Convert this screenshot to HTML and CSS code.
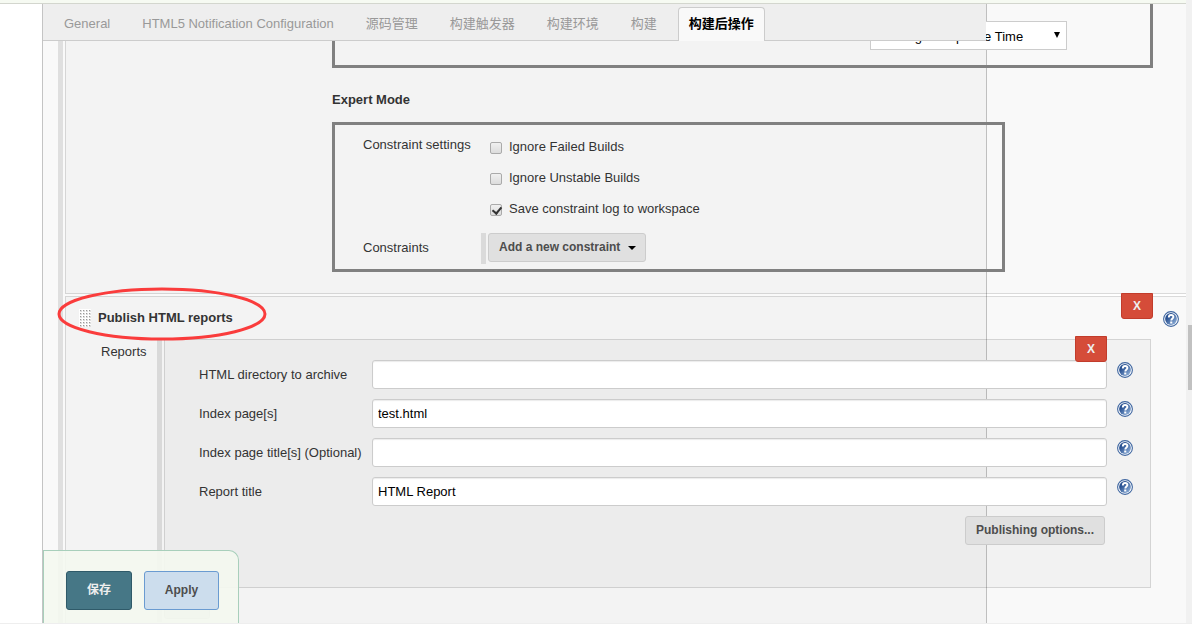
FILE: index.html
```
<!DOCTYPE html>
<html lang="zh">
<head>
    <meta charset="utf-8">
    <title>Config</title>
    <link rel="stylesheet" href="styles.css">
</head>
<body>
<svg class="defs">
    <defs>
        <linearGradient id="helpFill" x1="0" y1="0" x2="1" y2="1">
            <stop offset="0.3" stop-color="#2a5292"/>
            <stop offset="1" stop-color="#9dbde3"/>
        </linearGradient>
        <pattern id="dots" width="3" height="3" patternUnits="userSpaceOnUse">
            <rect width="3" height="3" fill="#fff"/>
            <rect x="1" y="1" width="2" height="2" fill="#ddd"/>
            <rect x="1" y="1" width="1" height="1" fill="#999"/>
        </pattern>
        <symbol id="help" viewBox="0 0 16 16">
            <circle cx="8" cy="8" r="7.4" fill="#fff" stroke="#3f66a0" stroke-width="1.1"/>
            <circle cx="8" cy="8" r="5.9" fill="url(#helpFill)"/>
            <path d="M5.8 6.4C5.8 4.8 6.7 4 8.1 4S10.4 4.8 10.4 6.1C10.4 7.5 8.3 7.6 8.3 9.5" fill="none" stroke="#fff" stroke-width="1.9"/>
            <rect x="7.2" y="10.5" width="2.1" height="2" fill="#fff"/>
        </symbol>
    </defs>
</svg>

<div class="top-strip"></div>
<div class="page">
    <main class="panel">
        <nav class="tabs">
            <a class="tab" href="#">General</a>
            <a class="tab" href="#">HTML5 Notification Configuration</a>
            <a class="tab" href="#">源码管理</a>
            <a class="tab" href="#">构建触发器</a>
            <a class="tab" href="#">构建环境</a>
            <a class="tab" href="#">构建</a>
            <a class="tab active" href="#">构建后操作</a>
        </nav>

        <form class="chunks">
            <section class="chunk performance">
                <div class="box box-cut">
                    <div class="select">
                        <select aria-label="Metric"><option>Average Response Time</option></select>
                        <svg class="arrow" width="6" height="6" viewBox="0 0 6 6"><path d="M0 0H6L3 6Z"/></svg>
                    </div>
                </div>
                <h3 class="expert">Expert Mode</h3>
                <div class="box box-expert">
                    <span class="name">Constraint settings</span>
                    <div class="checks">
                        <label class="check"><input type="checkbox">Ignore Failed Builds</label>
                        <label class="check"><input type="checkbox">Ignore Unstable Builds</label>
                        <label class="check"><input type="checkbox" checked>Save constraint log to workspace</label>
                    </div>
                    <span class="name">Constraints</span>
                    <div class="add">
                        <button class="btn" type="button">Add a new constraint
                            <svg width="8" height="4" viewBox="0 0 8 4"><path d="M0 0H8L4 4Z"/></svg>
                        </button>
                    </div>
                </div>
            </section>

            <section class="chunk publish">
                <button class="delete" type="button">X</button>
                <header class="chunk-head">
                    <svg class="handle" width="12" height="18"><rect width="12" height="18" fill="url(#dots)"/></svg>
                    <h3>Publish HTML reports</h3>
                    <svg class="help"><use href="#help"/></svg>
                </header>
                <div class="reports">
                    <span class="reports-name">Reports</span>
                    <div class="report-list">
                        <div class="report">
                            <button class="delete" type="button">X</button>
                            <label for="dir">HTML directory to archive</label>
                            <input id="dir" type="text">
                            <svg class="help"><use href="#help"/></svg>
                            <label for="index">Index page[s]</label>
                            <input id="index" type="text" value="test.html">
                            <svg class="help"><use href="#help"/></svg>
                            <label for="titles">Index page title[s] (Optional)</label>
                            <input id="titles" type="text">
                            <svg class="help"><use href="#help"/></svg>
                            <label for="title">Report title</label>
                            <input id="title" type="text" value="HTML Report">
                            <svg class="help"><use href="#help"/></svg>
                            <button class="btn options" type="button">Publishing options...</button>
                        </div>
                        <button class="btn add-report" type="button" aria-label="Add"></button>
                    </div>
                </div>
                <svg class="mark" width="210" height="54" viewBox="0 0 210 54"><ellipse cx="105" cy="27" rx="103" ry="25"/></svg>
            </section>
        </form>

        <div class="save-bar">
            <button class="save" type="button">保存</button>
            <button class="apply" type="button">Apply</button>
        </div>
    </main>
</div>
<div class="scrollbar"><div class="thumb"></div></div>
</body>
</html>
```

FILE: styles.css
```
* {
    box-sizing: border-box;
}

body {
    margin: 0;
    height: 100vh;
    overflow: hidden;
    display: flex;
    flex-direction: column;
    position: relative;
    background: #fff;
    color: #333;
    font: 13px/16px "Liberation Sans", "Noto Sans CJK SC", sans-serif;
    border-bottom: 1px solid #eee;
}

h3 {
    margin: 0;
    font-size: 13px;
}

button, input, select {
    font: inherit;
}

.defs {
    position: absolute;
    width: 0;
    height: 0;
}

.top-strip {
    height: 4px;
    flex: none;
    background: #f6faf2;
    border-bottom: 1px solid #d3d6ce;
}

.page {
    flex: 1;
    min-height: 0;
    display: flex;
    overflow: hidden;
    padding: 0 205px 0 42px;
}

.panel {
    flex: 1;
    position: relative;
    background: #f9f9f9;
    border: solid #c4c4c4;
    border-width: 0 1px;
}

/* tabs */
.tabs {
    position: absolute;
    z-index: 2;
    top: 0;
    left: 0;
    right: 0;
    height: 37px;
    display: flex;
    align-items: flex-end;
    gap: 10px;
    padding-left: 10px;
    background: #eee;
    border-bottom: 1px solid #ccc;
}

.tab {
    height: 34px;
    margin-bottom: -1px;
    padding: 0 10px;
    border: 1px solid transparent;
    border-bottom: 0;
    border-radius: 4px 4px 0 0;
    line-height: 32px;
    color: #999;
    text-decoration: none;
    white-space: nowrap;
}

.tab.active {
    background: #f9f9f9;
    border-color: #ccc;
    color: #000;
    font-weight: bold;
}

/* the chunks run wider than the panel */
.chunks {
    margin: 0 -200px 0 15px;
    padding-left: 2px;
    border-left: 5px solid #dfdfdf;
    height: 100%;
}

.chunk {
    position: relative;
    background: rgba(0, 0, 0, 0.025);
    border: 1px solid rgba(0, 0, 0, 0.12);
    border-right: 0;
}

.performance {
    border-top: 0;
    margin-bottom: 2px;
    padding: 0 33px 21px 266px;
}

.publish {
    height: 400px;
}

.box {
    border: 3px solid #808080;
}

.box-cut {
    height: 64px;
    border-top: 0;
    padding: 17px 83px 0 0;
    display: flex;
    justify-content: flex-end;
    align-items: flex-start;
}

.select {
    position: relative;
}

.select select {
    appearance: none;
    width: 197px;
    height: 29px;
    padding: 2px 10px 0;
    border: 1px solid #ccc;
    border-radius: 0;
    background: #fff;
    color: #000;
}

.arrow {
    position: absolute;
    right: 7px;
    top: 11px;
}

.expert {
    padding: 24px 0 14px;
}

.box-expert {
    width: 673px;
    height: 150px;
    padding: 8px 28px;
    display: grid;
    grid-template-columns: 118px 1fr;
    grid-template-rows: 100px 31px;
}

.name {
    padding-top: 4px;
}

.box-expert .name:nth-of-type(2) {
    padding-top: 7px;
}

.checks {
    padding: 6px 0 0 8px;
    display: grid;
    gap: 15px;
    align-content: start;
}

.check {
    display: flex;
    gap: 7px;
}

.check input {
    appearance: none;
    width: 12px;
    height: 12px;
    margin: 3px 0 0 1px;
    border: 1px solid #aaa;
    border-radius: 2px;
    background: linear-gradient(#f0f0f0, #dcdcdc);
    position: relative;
}

.check input:checked::after {
    content: "";
    position: absolute;
    left: 3px;
    top: 0;
    width: 4px;
    height: 7px;
    border: solid #333;
    border-width: 0 2px 2px 0;
    transform: rotate(40deg);
}

.add {
    border-left: 5px solid #dadada;
    padding-left: 2px;
}

.btn {
    height: 29px;
    padding: 0 10px 2px;
    background: #e0e0e0;
    border: 1px solid #ccc;
    border-radius: 3px;
    color: #4d4d4d;
    font-size: 12px;
    font-weight: bold;
}

.add .btn {
    display: flex;
    align-items: center;
    gap: 8px;
    padding-right: 9px;
}

.add svg {
    margin-top: 2px;
}

.delete {
    position: absolute;
    z-index: 1;
    top: -4px;
    right: 33px;
    width: 32px;
    height: 26px;
    padding: 0;
    background: #d54c39;
    border: 1px solid #c23c2b;
    border-radius: 0 0 3px 3px;
    color: #eee;
    font-size: 12px;
    font-weight: bold;
}

.help {
    width: 16px;
    height: 16px;
}

.chunk-head {
    height: 42px;
    display: flex;
    align-items: center;
    padding: 0 7px 0 13px;
}

.chunk-head h3 {
    padding-left: 7px;
    flex: 1;
}

.chunk-head .help {
    margin-top: 2px;
}

.reports {
    display: grid;
    grid-template-columns: 91px 1fr;
    padding-right: 35px;
}

.reports-name {
    padding: 5px 0 0 35px;
}

.report-list {
    border-left: 5px solid #d9d9d9;
    padding: 0 0 3px 2px;
}

.report {
    position: relative;
    display: grid;
    grid-template-columns: 163px 1fr 16px;
    gap: 10px;
    padding: 20px 17px 42px 34px;
    background: rgba(0, 0, 0, 0.028);
    border: 1px solid rgba(0, 0, 0, 0.12);
}

.report label {
    line-height: 29px;
    white-space: nowrap;
}

.report input {
    width: 100%;
    height: 29px;
    padding: 0 5px;
    border: 1px solid #ccc;
    border-radius: 3px;
    background: #fff;
    box-shadow: inset 0 1px 1px rgba(0, 0, 0, 0.08);
    color: #000;
}

.report .help {
    margin-top: 2px;
}

.report .delete {
    right: 43px;
}

.options {
    grid-column: 2;
    justify-self: end;
    margin-right: 2px;
}

.add-report {
    width: 46px;
    height: 31px;
    display: block;
}

.mark {
    position: absolute;
    left: -9px;
    top: -10px;
    fill: none;
    stroke: #fa3c3c;
    stroke-width: 3;
}

/* fixed save / apply bar */
.save-bar {
    position: absolute;
    z-index: 3;
    left: 0;
    bottom: 0;
    display: flex;
    gap: 12px;
    padding: 20px 19px 13px 22px;
    background: rgba(244, 248, 240, 0.9);
    border: 1px solid #a8cfbb;
    border-bottom: 0;
    border-radius: 0 10px 0 0;
}

.save, .apply {
    width: 66px;
    height: 39px;
    padding: 0 0 2px;
    border: 1px solid #2f5a69;
    border-radius: 3px;
    background: #467786;
    color: #eee;
    font-size: 12px;
    font-weight: bold;
}

.apply {
    width: 75px;
    background: #ccdded;
    border-color: #6a9bd1;
    color: #4d4d4d;
}

.scrollbar {
    position: absolute;
    z-index: 4;
    top: 0;
    right: 0;
    bottom: 0;
    width: 6px;
    padding: 325px 0 0 2px;
    background: #f1f1f1;
}

.thumb {
    height: 65px;
    background: #c1c1c1;
}
```
